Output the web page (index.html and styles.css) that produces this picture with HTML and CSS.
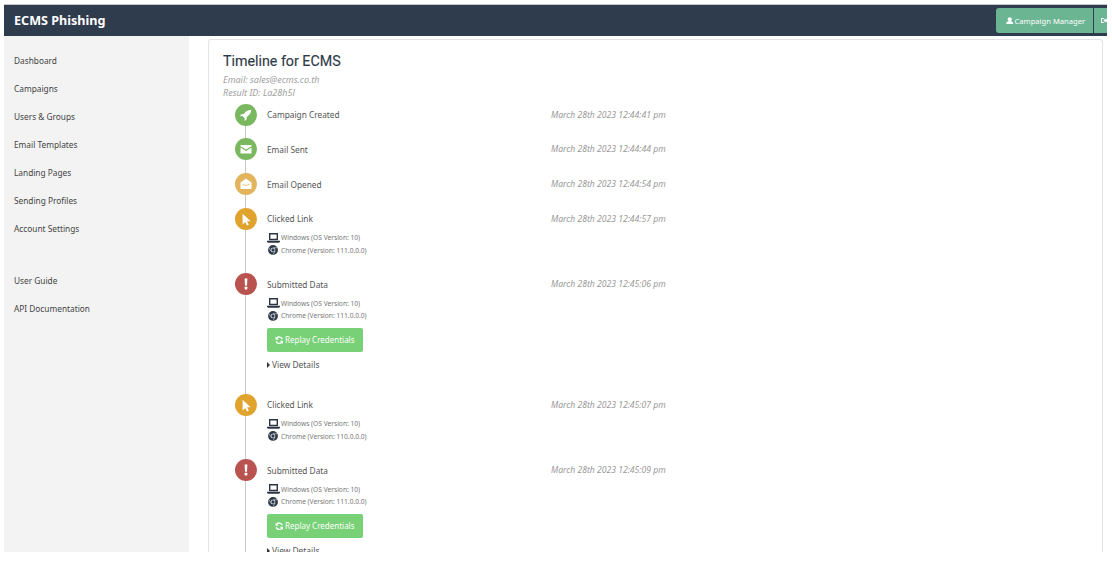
FILE: index.html
```html
<!DOCTYPE html>
<html lang="en">
<head>
<meta charset="utf-8">
<title>ECMS Phishing</title>
<link rel="stylesheet" href="styles.css">
</head>
<body>
<svg class="defs" width="0" height="0" aria-hidden="true">
  <symbol id="laptop" viewBox="0 0 13 10"><path d="M2 0h9v7.200H2z M3.400 1.400v4.400h6.200V1.400z" fill-rule="evenodd" fill="#2b3440"/><path d="M0 7.800h13v1l-1 .9H1l-1-.9z" fill="#2b3440"/></symbol>
  <symbol id="chrome" viewBox="0 0 10 10"><circle cx="5" cy="5" r="4.900" fill="#2f3a4a"/><circle cx="5" cy="5" r="2.300" fill="#fff"/><circle cx="5" cy="5" r="1.700" fill="#2f3a4a"/><path d="M5 2.700h4.400M3 6.200.8 2.400M7 6.200 4.800 9.900" stroke="#fff" stroke-width=".5"/></symbol>
  <symbol id="refresh" viewBox="0 0 12 12"><path d="M10.300 4.600A4.500 4.500 0 0 0 2.600 3" fill="none" stroke="#fff" stroke-width="1.900"/><path d="M.8.800v4.400h4.400z" fill="#fff"/><path d="M1.700 7.400A4.500 4.500 0 0 0 9.400 9" fill="none" stroke="#fff" stroke-width="1.900"/><path d="M11.200 11.200V6.800H6.800z" fill="#fff"/></symbol>
  <symbol id="cursor" viewBox="0 0 22 22"><path d="M7.600 5.800v10.600l2.700-2.500 1.700 3.600 1.800-.8-1.700-3.500h3.600z" fill="#fff"/></symbol>
  <symbol id="alert" viewBox="0 0 22 22"><path d="M9.600 5.500h2.800l-.4 7.200h-2z" fill="#fff"/><rect x="9.700" y="13.800" width="2.600" height="2.600" rx=".4" fill="#fff"/></symbol>
</svg>
<div class="frame">
  <header class="navbar">
    <span class="brand">ECMS Phishing</span>
    <div class="nav-actions">
      <a class="nav-btn user-btn"><svg class="user-icon" viewBox="0 0 10 10"><circle cx="5" cy="2.900" r="2.700" fill="#fff"/><path d="M.3 9.800c0-3.300 1.700-4.400 4.700-4.400s4.700 1.100 4.700 4.400z" fill="#fff"/></svg>Campaign Manager</a>
      <a class="nav-btn exit-btn"><svg class="exit-icon" viewBox="0 0 10 10"><path d="M0 1.500h4v1.500H1.500v4H4v1.500H0z M4 3.700h2.600V1.800L10 5 6.600 8.200V6.300H4z" fill="#fff"/></svg></a>
    </div>
  </header>
  <div class="layout">
    <nav class="sidebar">
      <ul class="nav-list">
        <li>Dashboard</li>
        <li>Campaigns</li>
        <li>Users &amp; Groups</li>
        <li>Email Templates</li>
        <li>Landing Pages</li>
        <li>Sending Profiles</li>
        <li>Account Settings</li>
      </ul>
      <ul class="nav-list nav-list-second">
        <li>User Guide</li>
        <li>API Documentation</li>
      </ul>
    </nav>
    <main class="card">
      <h1 class="title">Timeline for ECMS</h1>
      <p class="meta">Email: sales@ecms.co.th</p>
      <p class="meta">Result ID: La28h5l</p>
      <div class="timeline">
        <section class="event ev-plain">
          <div class="rail"><span class="dot green"><svg class="glyph" viewBox="0 0 22 22"><path d="M16.200 5.800c-3.600.2-5.600 1.600-7.300 4.200l-2.700.3-1.300 2 2.600-.2 2.200 2.200-.2 2.600 2-1.300.3-2.700c2.600-1.700 4.100-3.500 4.400-7.100z" fill="#fff"/></svg></span></div>
          <div class="body"><div class="head"><span class="name">Campaign Created</span><time class="when">March 28th 2023 12:44:41 pm</time></div></div>
        </section>
        <section class="event ev-plain">
          <div class="rail"><span class="dot green"><svg class="glyph" viewBox="0 0 22 22"><path d="M5.500 7h11v1.200L11 11.600 5.500 8.200z" fill="#fff"/><path d="M5.500 9.500 11 13l5.500-3.500V15.500h-11z" fill="#fff"/></svg></span></div>
          <div class="body"><div class="head"><span class="name">Email Sent</span><time class="when">March 28th 2023 12:44:44 pm</time></div></div>
        </section>
        <section class="event ev-plain">
          <div class="rail"><span class="dot yellow"><svg class="glyph" viewBox="0 0 22 22"><path d="M5.500 9.500 11 5.500l5.500 4V16h-11z" fill="#fff"/><path d="M7.500 11.200q3.500 2.600 7 0" fill="none" stroke="#e3b45c" stroke-width=".8"/></svg></span></div>
          <div class="body"><div class="head"><span class="name">Email Opened</span><time class="when">March 28th 2023 12:44:54 pm</time></div></div>
        </section>
        <section class="event ev-click">
          <div class="rail"><span class="dot orange"><svg class="glyph"><use href="#cursor"/></svg></span></div>
          <div class="body">
            <div class="head"><span class="name">Clicked Link</span><time class="when">March 28th 2023 12:44:57 pm</time></div>
            <div class="device"><svg class="laptop"><use href="#laptop"/></svg>Windows (OS Version: 10)</div>
            <div class="device"><svg class="chrome"><use href="#chrome"/></svg>Chrome (Version: 111.0.0.0)</div>
          </div>
        </section>
        <section class="event ev-submit">
          <div class="rail"><span class="dot red"><svg class="glyph"><use href="#alert"/></svg></span></div>
          <div class="body">
            <div class="head"><span class="name">Submitted Data</span><time class="when">March 28th 2023 12:45:06 pm</time></div>
            <div class="device"><svg class="laptop"><use href="#laptop"/></svg>Windows (OS Version: 10)</div>
            <div class="device"><svg class="chrome"><use href="#chrome"/></svg>Chrome (Version: 111.0.0.0)</div>
            <a class="replay"><svg class="refresh"><use href="#refresh"/></svg>Replay Credentials</a>
            <div class="details"><span class="caret"></span>View Details</div>
          </div>
        </section>
        <section class="event ev-click">
          <div class="rail"><span class="dot orange"><svg class="glyph"><use href="#cursor"/></svg></span></div>
          <div class="body">
            <div class="head"><span class="name">Clicked Link</span><time class="when">March 28th 2023 12:45:07 pm</time></div>
            <div class="device"><svg class="laptop"><use href="#laptop"/></svg>Windows (OS Version: 10)</div>
            <div class="device"><svg class="chrome"><use href="#chrome"/></svg>Chrome (Version: 110.0.0.0)</div>
          </div>
        </section>
        <section class="event ev-submit">
          <div class="rail"><span class="dot red"><svg class="glyph"><use href="#alert"/></svg></span></div>
          <div class="body">
            <div class="head"><span class="name">Submitted Data</span><time class="when">March 28th 2023 12:45:09 pm</time></div>
            <div class="device"><svg class="laptop"><use href="#laptop"/></svg>Windows (OS Version: 10)</div>
            <div class="device"><svg class="chrome"><use href="#chrome"/></svg>Chrome (Version: 111.0.0.0)</div>
            <a class="replay"><svg class="refresh"><use href="#refresh"/></svg>Replay Credentials</a>
            <div class="details"><span class="caret"></span>View Details</div>
          </div>
        </section>
      </div>
    </main>
  </div>
</div>
</body>
</html>
```
FILE: styles.css
```css
* { box-sizing: border-box; }
html, body { margin: 0; height: 100%; background: #fff; overflow: hidden; }
body { padding: 4px 5px 0 4px; font-family: "Noto Sans", "Liberation Sans", sans-serif; color: #555; }
.defs { position: absolute; }
.frame { height: 548px; overflow: hidden; display: flex; flex-direction: column; border-top: 1px solid #c4c6c8; }
.navbar { flex: 0 0 31px; background: #2f3c4e; display: flex; align-items: flex-start; justify-content: space-between; padding-left: 10px; overflow: hidden; }
.brand { color: #fff; font-weight: 700; font-size: 12.6px; line-height: 31px; }
.nav-actions { display: flex; gap: 1px; margin-top: 3px; }
.nav-btn { background: #6bb593; height: 25px; color: #fff; display: flex; align-items: center; font-size: 7.6px; }
.user-btn { width: 97px; border-radius: 3px 0 0 3px; padding-left: 10px; }
.exit-btn { width: 13px; padding-left: 7px; }
.user-icon { width: 7.5px; height: 7.5px; margin-right: 1px; flex: none; }
.exit-icon { width: 7px; height: 7px; flex: none; }
.layout { flex: 1; display: flex; min-height: 0; }
.sidebar { flex: 0 0 185px; background: #f3f3f3; padding-top: 11px; }
.nav-list { list-style: none; margin: 0; padding: 0 0 0 10px; }
.nav-list li { height: 28px; line-height: 28px; font-size: 8.3px; color: #444; }
.nav-list-second { margin-top: 24px; }
.card { margin: 3px 0 0 19px; width: 895px; border: 1px solid #e4e4e4; border-bottom: 0; border-radius: 3px 3px 0 0; padding: 11px 14px 0; }
.title { margin: 0 0 1.5px; font-family: Roboto, sans-serif; font-weight: 400; font-size: 14.25px; line-height: 20px; color: #2f3a48; -webkit-text-stroke: 0.15px #2f3a48; }
.meta { margin: 0; font-style: italic; font-size: 9px; line-height: 13.5px; color: #a0a0a0; }
.timeline { margin: 4.7px 0 0 11.5px; }
.event { display: flex; }
.ev-plain { height: 34.7px; }
.ev-click { height: 65.5px; }
.ev-submit { height: 120.5px; }
.rail { flex: 0 0 22px; display: flex; flex-direction: column; align-items: center; position: relative; }
.rail::after { content: ""; flex: 1; width: 1px; background: #c8c8c8; }
.dot { flex: none; width: 22px; height: 22px; margin-top: -0.5px; border-radius: 50%; display: block; }
.green { background: #7ab85f; }
.yellow { background: #e3b45c; }
.orange { background: #e0a32e; }
.red { background: #b9534f; }
.glyph { display: block; width: 22px; height: 22px; }
.body { flex: 1; padding-left: 10.5px; }
.head { display: flex; align-items: center; height: 21px; }
.name { flex: 0 0 284px; font-size: 8.3px; color: #555; }
.when { font-style: italic; font-size: 8.6px; color: #999; }
.device { display: flex; align-items: center; height: 12.5px; font-size: 6.65px; color: #777; }
.head + .device { margin-top: 2px; }
.laptop { width: 13px; height: 10px; margin-right: 1px; flex: none; }
.chrome { width: 10px; height: 10px; margin: 0 3px 0 1px; flex: none; }
.replay { width: 96px; height: 24px; margin-top: 6px; background: #78d077; border-radius: 2px; color: #fff; font-size: 8px; display: flex; align-items: center; justify-content: center; }
.refresh { width: 8.5px; height: 8.5px; margin-right: 1px; flex: none; }
.details { display: flex; align-items: center; height: 14px; margin-top: 6px; font-size: 8.4px; color: #555; }
.caret { border-left: 3px solid #333; border-top: 3px solid transparent; border-bottom: 3px solid transparent; margin-right: 2px; }
```
